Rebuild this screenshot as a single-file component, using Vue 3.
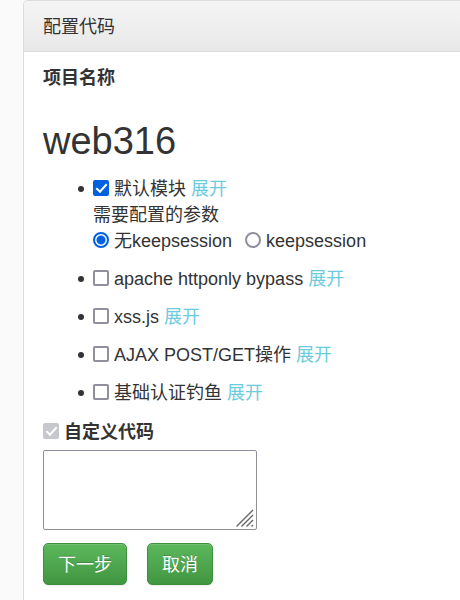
<script setup>
import { ref } from 'vue'

const project = 'web316'
const session = ref('none')
const custom = ref(true)
const code = ref('')
const modules = ref([
  {
    name: '默认模块',
    checked: true,
    options: [
      { value: 'none', text: '无keepsession' },
      { value: 'keep', text: 'keepsession' }
    ]
  },
  { name: 'apache httponly bypass', checked: false },
  { name: 'xss.js', checked: false },
  { name: 'AJAX POST/GET操作', checked: false },
  { name: '基础认证钓鱼', checked: false }
])
</script>

<template>
  <main class="page">
    <section class="panel">
      <header class="panel-head">配置代码</header>
      <form class="panel-body" @submit.prevent>
        <strong class="label">项目名称</strong>
        <h1 class="title">{{ project }}</h1>
        <ul class="modules">
          <li v-for="m in modules" :key="m.name" class="module">
            <div class="row">
              <label class="choice"><input v-model="m.checked" type="checkbox" class="box" />{{ m.name }}</label>
              <a href="#" class="link">展开</a>
            </div>
            <template v-if="m.options">
              <div class="row">需要配置的参数</div>
              <div class="row options">
                <label v-for="o in m.options" :key="o.value" class="choice">
                  <input v-model="session" type="radio" name="session" :value="o.value" class="radio" />{{ o.text }}
                </label>
              </div>
            </template>
          </li>
        </ul>
        <label class="choice custom"><input v-model="custom" type="checkbox" class="box" disabled />自定义代码</label>
        <div class="area">
          <textarea v-model="code" class="code" aria-label="自定义代码"></textarea>
          <svg class="grip" viewBox="0 0 18 18" aria-hidden="true">
            <path d="M0.5 17.5 17 1M5.5 17.5 17 6M10.5 17.5 17 11M15.5 17.5 17 16" />
          </svg>
        </div>
        <div class="actions">
          <button type="submit" class="btn">下一步</button>
          <button type="button" class="btn">取消</button>
        </div>
      </form>
    </section>
  </main>
</template>

<style>
body {
  background: #fafafa;
}
</style>

<style scoped>
.page {
  min-height: 100vh;
  box-sizing: border-box;
  padding-left: 23px;
  display: flex;
  color: #333;
  font: 18px/26px "Liberation Sans", Arial, "Noto Sans CJK SC", sans-serif;
}
.panel {
  flex: 1;
  background: #fff;
  border: 1px solid #ddd;
  border-right: 0;
  border-bottom: 0;
  border-radius: 5px 0 0 0;
  overflow: hidden;
}
.panel-head {
  padding: 13px 19px 11px;
  background: linear-gradient(#f5f5f5, #e8e8e8);
  border-bottom: 1px solid #ddd;
}
.panel-body {
  padding: 13px 19px 15px;
}
.label {
  display: block;
}
.title {
  margin: 30px 0 15px;
  font-size: 38px;
  line-height: 40px;
  font-weight: 400;
}
.modules {
  margin: 0;
  padding: 0 0 0 50px;
  list-style: none;
  display: grid;
  gap: 12px;
}
.module {
  position: relative;
}
.module::before {
  content: "";
  position: absolute;
  left: -15px;
  top: 10px;
  width: 6px;
  height: 6px;
  border-radius: 50%;
  background: #333;
}
.row {
  display: flex;
  align-items: center;
  gap: 5px;
  height: 26px;
  white-space: nowrap;
}
.options {
  gap: 13px;
}
.choice {
  display: flex;
  align-items: center;
  gap: 5px;
}
.box,
.radio {
  appearance: none;
  box-sizing: border-box;
  flex: none;
  width: 16px;
  height: 16px;
  margin: 0 0 2px;
  border: 2px solid #8f8f9d;
  border-radius: 2px;
  background: #fff;
}
.radio {
  border-radius: 50%;
}
.radio:checked {
  border-color: #0060df;
  background: radial-gradient(circle, #0060df 4px, #fff 5px);
}
.box:checked {
  display: grid;
  place-items: center;
  border-color: #0060df;
  background: #0060df;
}
.box:checked::before {
  content: "";
  width: 9px;
  height: 4px;
  box-sizing: content-box;
  border: solid #fff;
  border-width: 0 0 2px 2px;
  transform: translateY(-1px) rotate(-48deg);
}
.box:disabled {
  border-color: #c7c7ce;
  background: #c7c7ce;
}
.link {
  color: #6ccbdd;
  text-decoration: none;
}
.custom {
  margin-top: 13px;
  font-weight: 700;
}
.area {
  position: relative;
  width: 214px;
  margin-top: 5px;
}
.code {
  display: block;
  box-sizing: border-box;
  width: 100%;
  height: 80px;
  margin: 0;
  padding: 2px;
  border: 1px solid #8f8f9d;
  border-radius: 2px;
  background: #fff;
  font: inherit;
  resize: none;
}
.grip {
  position: absolute;
  right: 3px;
  bottom: 3px;
  width: 18px;
  height: 18px;
  fill: none;
  stroke: #666;
  stroke-width: 1.4;
  pointer-events: none;
}
.actions {
  display: flex;
  gap: 20px;
  margin-top: 13px;
}
.btn {
  padding: 8px 14px 6px;
  border: 1px solid #3e8f3e;
  border-radius: 5px;
  background: linear-gradient(#5cb85c, #419641);
  box-shadow: inset 0 1px 0 rgba(255, 255, 255, 0.15), 0 1px 1px rgba(0, 0, 0, 0.08);
  color: #fff;
  font: inherit;
  text-shadow: 0 -1px 0 rgba(0, 0, 0, 0.2);
}
</style>
